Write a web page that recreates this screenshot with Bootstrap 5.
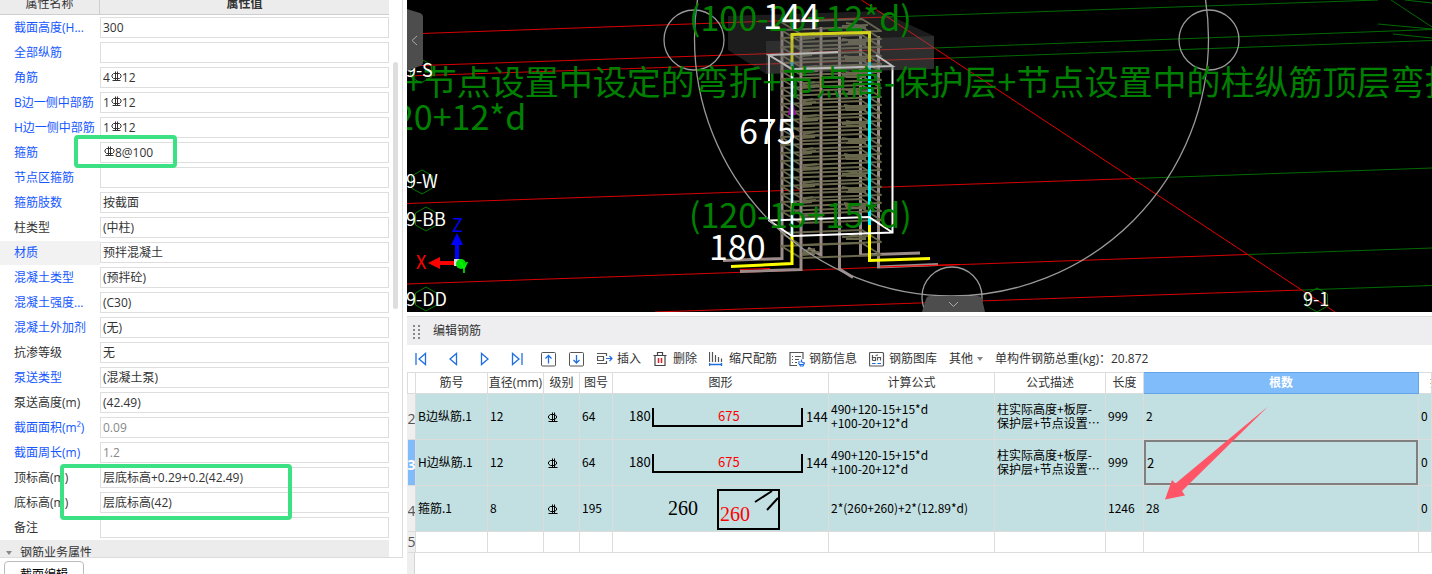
<!DOCTYPE html>
<html lang="zh-CN">
<head>
<meta charset="utf-8">
<meta name="viewport" content="width=device-width, initial-scale=1">
<title>编辑钢筋</title>
<link rel="stylesheet" href="https://cdn.jsdelivr.net/npm/bootstrap@5.3.0/dist/css/bootstrap.min.css">
<style>
  :root { --line: #dcdcdc; --rebar: #c2dfe1; --pick: #80bbfa; }
  body { font: 12px/18px "Open Sans", "Noto Sans CJK SC", sans-serif; color: #333; background: #fff; }

  /* property panel */
  .props { width: 403px; }
  .props-list { border-right: 1px solid var(--line); border-bottom: 1px solid var(--line); min-height: 0; }
  .props-head { height: 15px; line-height: 20px; background: #ececec; border-bottom: 1px solid #cfcfcf; margin-right: 13px; }
  .props-head .name-col { width: 100px; border-right: 1px solid #cfcfcf; }
  .prop { height: 25px; margin-right: 13px; }
  .prop label { width: 100px; padding-left: 14px; height: 24px; line-height: 24px; white-space: nowrap; }
  .prop.common label { color: #1557ff; }
  .prop.active label { background: #f2f2f2; }
  .prop input { height: 21px; min-width: 0; border: 1px solid #dedede; padding: 0 2px 1px; color: #333; background-color: #fff; }
  .prop input:disabled { color: #888; }
  .prop .grade { background-repeat: no-repeat; background-position: 10px 3px;
    background-image: url("data:image/svg+xml,%3Csvg xmlns='http://www.w3.org/2000/svg' width='11' height='11' fill='none' stroke='%23333'%3E%3Cpath d='M2.5 2.500h6l1.500 1.500v2l-1.500 1.500h-6L1 6V4zM4.500.5v9M6.500.5v9M1.500 9.500h8'/%3E%3C/svg%3E"); }
  .prop .grade-first { background-position: 3px 3px; }
  .props-group { height: 25px; line-height: 24px; background: #ececec; margin-right: 13px; padding-left: 6px; }
  .caret { border: 3px solid transparent; border-top: 4px solid #888; border-bottom: 0; width: 6px; }
  .scroll-thumb { right: 4px; top: 62px; width: 5px; height: 247px; background: #dedede; border-radius: 3px; }
  .props-foot { height: 16px; padding: 3px 4px 0; }
  .props-foot button { width: 80px; height: 28px; line-height: 24px; border: 1px solid #bbb; border-radius: 4px; background: #fff; padding: 0; }
  .marker { border: 4px solid #3be183; border-radius: 4px; pointer-events: none; }
  .marker-stirrup { left: 74px; top: 135px; width: 103px; height: 33px; }
  .marker-level { left: 60px; top: 464px; width: 232px; height: 56px; }

  /* 3D view */
  .scene { height: 312px; background: #000; font-family: "Noto Sans CJK SC", sans-serif; }
  .scene .formula { font-size: 34px; fill: #008000; }
  .scene .dim { font-size: 34px; fill: #fff; }
  .scene .axis { font-size: 18px; fill: #fff; }

  /* rebar editor */
  .editor { margin-top: 4px; background: #fff; min-height: 0; }
  .editor-title { height: 29px; background: #eeeef0; border-top: 1px solid var(--line); padding-left: 6px; gap: 12px; }
  .tools { height: 27px; padding-left: 6px; gap: 12px; white-space: nowrap; }
  .tools button { border: 0; background: none; padding: 0; color: #333; display: flex; align-items: center; gap: 4px; height: 24px; }
  .tools svg { flex: none; }
  .grid-area { background: linear-gradient(to right, #efefef 7px, #d4d4d4 7px, #d4d4d4 8px, #fff 8px); min-height: 0; }
  .bars { table-layout: fixed; width: 100%; border-collapse: collapse; border-top: 1px solid var(--line); font: 12px/14px "Noto Sans CJK SC", sans-serif; color: #000; }
  .bars th, .bars td { border: 1px solid var(--line); padding: 0 2px 2px; overflow: hidden; height: 46px; background: var(--rebar); }
  .bars td { white-space: nowrap; }
  .bars thead th { height: 20px; background: #fff; color: #333; font-weight: 400; text-align: center; white-space: nowrap; font-family: "Open Sans", "Noto Sans CJK SC", sans-serif; padding: 0; line-height: 20px; }
  .bars thead th.picked { background: var(--pick); color: #fff; font-weight: 700; border-color: #64a4e8; }
  .bars tbody th { background: #efefef; border-left: 0; padding: 4px 0 0; color: #555; font: 14px/18px "Open Sans", sans-serif; }
  .bars tbody th.picked { background: var(--pick); color: #fff; font-weight: 700; }
  .bars tr.blank th, .bars tr.blank td { height: 21px; padding: 0; }
  .bars tr.blank td { background: #fff; }
  .bars td.shape { padding: 0; }
  .bars td.shape svg { display: block; }
  .bars td.editing { padding: 0; }
  .bars td.editing input { display: block; width: 100%; height: 45px; border: 2px solid #808080; background: transparent; padding: 0 1px; font-size: 13px; color: #000; }
  .bars .cut { text-align: left; padding-left: 11px; }
  .pointer { right: 160px; top: 33px; pointer-events: none; }
</style>
</head>
<body class="vh-100 overflow-hidden">
<svg width="0" height="0" class="position-absolute" aria-hidden="true">
  <defs>
    <g id="hrb" fill="none" stroke="#000"><path d="M2.500 2.500h4l2 1.500v2l-2 1.500h-4L.5 6V4zM4.500.5v9M6.500.5v9M.5 9.500h9"/></g>
    <g id="ushape"><path d="M40 14v18h149V14" fill="none" stroke="#000" stroke-width="2"/>
      <text x="16" y="27">180</text><text x="105" y="27" fill="#f00">675</text><text x="193" y="28">144</text></g>
  </defs>
</svg>

<div class="d-flex h-100 gap-1">
  <aside class="props d-flex flex-column flex-shrink-0 position-relative">
    <div class="props-list flex-grow-1 overflow-hidden position-relative">
      <div class="props-head d-flex overflow-hidden text-center">
        <div class="name-col d-flex align-items-end justify-content-center">属性名称</div>
        <div class="flex-grow-1 d-flex align-items-end justify-content-center fw-bold">属性值</div>
      </div>
      <div>
        <div class="prop common d-flex align-items-center"><label for="p1">截面高度(H...</label><input id="p1" class="flex-grow-1" value="300"></div>
        <div class="prop common d-flex align-items-center"><label for="p2">全部纵筋</label><input id="p2" class="flex-grow-1" value=""></div>
        <div class="prop common d-flex align-items-center"><label for="p3">角筋</label><input id="p3" class="flex-grow-1 grade" value="4　12"></div>
        <div class="prop common d-flex align-items-center"><label for="p4">B边一侧中部筋</label><input id="p4" class="flex-grow-1 grade" value="1　12"></div>
        <div class="prop common d-flex align-items-center"><label for="p5">H边一侧中部筋</label><input id="p5" class="flex-grow-1 grade" value="1　12"></div>
        <div class="prop common d-flex align-items-center"><label for="p6">箍筋</label><input id="p6" class="flex-grow-1 grade grade-first" value="　8@100"></div>
        <div class="prop common d-flex align-items-center"><label for="p7">节点区箍筋</label><input id="p7" class="flex-grow-1" value=""></div>
        <div class="prop common d-flex align-items-center"><label for="p8">箍筋肢数</label><input id="p8" class="flex-grow-1" value="按截面"></div>
        <div class="prop d-flex align-items-center"><label for="p9">柱类型</label><input id="p9" class="flex-grow-1" value="(中柱)"></div>
        <div class="prop common active d-flex align-items-center"><label for="p10">材质</label><input id="p10" class="flex-grow-1" value="预拌混凝土"></div>
        <div class="prop common d-flex align-items-center"><label for="p11">混凝土类型</label><input id="p11" class="flex-grow-1" value="(预拌砼)"></div>
        <div class="prop common d-flex align-items-center"><label for="p12">混凝土强度...</label><input id="p12" class="flex-grow-1" value="(C30)"></div>
        <div class="prop common d-flex align-items-center"><label for="p13">混凝土外加剂</label><input id="p13" class="flex-grow-1" value="(无)"></div>
        <div class="prop d-flex align-items-center"><label for="p14">抗渗等级</label><input id="p14" class="flex-grow-1" value="无"></div>
        <div class="prop common d-flex align-items-center"><label for="p15">泵送类型</label><input id="p15" class="flex-grow-1" value="(混凝土泵)"></div>
        <div class="prop d-flex align-items-center"><label for="p16">泵送高度(m)</label><input id="p16" class="flex-grow-1" value="(42.49)"></div>
        <div class="prop common d-flex align-items-center"><label for="p17">截面面积(m²)</label><input id="p17" class="flex-grow-1" value="0.09" disabled></div>
        <div class="prop common d-flex align-items-center"><label for="p18">截面周长(m)</label><input id="p18" class="flex-grow-1" value="1.2" disabled></div>
        <div class="prop d-flex align-items-center"><label for="p19">顶标高(m)</label><input id="p19" class="flex-grow-1" value="层底标高+0.29+0.2(42.49)"></div>
        <div class="prop d-flex align-items-center"><label for="p20">底标高(m)</label><input id="p20" class="flex-grow-1" value="层底标高(42)"></div>
        <div class="prop d-flex align-items-center"><label for="p21">备注</label><input id="p21" class="flex-grow-1" value=""></div>
      </div>
      <div class="props-group d-flex align-items-center gap-2"><span class="caret"></span><span>钢筋业务属性</span></div>
      <div class="scroll-thumb position-absolute"></div>
    </div>
    <div class="props-foot overflow-hidden"><button type="button">截面编辑</button></div>
    <div class="marker marker-stirrup position-absolute"></div>
    <div class="marker marker-level position-absolute"></div>
  </aside>

  <main class="d-flex flex-column flex-grow-1 overflow-hidden">
    <svg class="scene d-block w-100 flex-shrink-0" role="img" aria-label="柱钢筋三维">
      <g transform="translate(-407 0)">
        <g stroke="#d80000" fill="none">
          <path d="M407 34L887 17M407 66L934 48M407 76L950 58M407 203.500L1134 178.500M407 284L1248 254.500M655 312L1302 290"/>
          <path stroke="#e60000" d="M861.500 0L1335 312"/>
        </g>
        <path stroke="#006a00" fill="none" d="M887 17L1378 0M934 48L1432 29.500M950 58L1432 40.500M1134 178.500L1432 168M1248 254.500L1432 248M1302 290L1432 285.500M1391 0L1432 27M1378 24L1432 29M1393 34L1432 38M1405 0L1432 3"/>
        <g stroke="#007a00" fill="none">
          <path id="hex" d="M422 170l10.500 6v12l-10.500 6-10.500-6v-12z"/>
          <use href="#hex" x="4" y="37"/><use href="#hex" x="4" y="117"/><use href="#hex" x="-1" y="-111"/><use href="#hex" x="895" y="118"/>
        </g>
        <!-- column cage -->
        <g fill="none" stroke="#9b8b89" stroke-width="3">
          <path d="M782 30V258.500L723 260.500M801 35V269.500L740 271.500M821 27V255L808 248M839.500 37V269L853 277.500M860.500 26V255L920 253M878.500 36V267L938 264.500"/>
        </g>
        <path stroke="#f00" d="M740 269.500L770 268.500M880 267L960 264.500"/>
        <g id="hoops" fill="none" stroke="#69674c" stroke-width="2" stroke-linejoin="round"></g>
        <path d="M801 35V269M821 27V255M839.500 37V269" stroke="#9b8b89" stroke-width="2" opacity=".7"/>
        <path d="M792 97l4 18h-8z" fill="#a0a"/>
        <path d="M792 62V236" stroke="#3cc" stroke-width="3"/>
        <path d="M869.500 62V225" stroke="#0ff" stroke-width="3"/>
        <path d="M792 62V34.500L869.500 32.500V62M792 236V263.500L731 266.500M869.500 225V260.500L930 258.500" fill="none" stroke="#ff0" stroke-width="3"/>
        <g fill="none" stroke="#fff" stroke-width="2">
          <path d="M838 52L769 55L792 69L892.500 66L876 55M769 55V220.500L792 236L892.500 232.500V66M792 69V236M769 220.500L869 217L892.500 232.500"/>
        </g>
        <path d="M728 16L880 11L934 36L766 41V74L728 50z" fill="#666" opacity=".28"/>
        <path d="M766 41L934 36V69L766 74z" fill="#666" opacity=".45"/>
        <g fill="none" stroke="#999" stroke-width="1.300">
          <circle cx="951.500" cy="39" r="257"/><circle cx="694" cy="40" r="30"/><circle cx="1209" cy="40" r="30"/><circle cx="952" cy="297" r="30"/>
        </g>
        <g class="formula">
          <text x="689" y="31">(100-20+12*d)</text>
          <text x="404" y="95">+节点设置中设定的弯折+节点高-保护层+节点设置中的柱纵筋顶层弯折</text>
          <text x="395" y="130">20+12*d</text>
          <text x="689" y="228">(120-15+15*d)</text>
        </g>
        <g class="dim"><text x="763" y="29">144</text><text x="739" y="144">675</text><text x="709" y="260">180</text></g>
        <g class="axis">
          <text x="406" y="77">9-S</text><text x="406" y="188">9-W</text><text x="406" y="226">9-BB</text><text x="406" y="306">9-DD</text><text x="1303" y="306">9-1</text>
          <text x="416" y="269" style="fill:#f00">X</text><text x="452" y="232" style="fill:#00f">Z</text>
        </g>
        <path d="M440 261h15v4h-15v4l-12-6 12-6z" fill="#f00"/>
        <path d="M455 259v-14h-4l6-12 6 12h-4v14z" fill="#00f"/>
        <path d="M454 259h7v7h-7z" fill="#ddd"/><circle cx="461" cy="264" r="5" fill="#0d0"/>
        <text x="460" y="273" font-size="15" fill="#0f0">Y</text>
        <path d="M407 9l13 4q3 1 3 4v45q0 3-3 4l-13 5z" fill="#4d4d4d"/><path d="M417 36l-5 4.500 5 4.500" stroke="#aaa" fill="none"/>
        <path d="M922 312l4-13q1-3 4-3h48q3 0 4 3l3 13z" fill="#4d4d4d"/><path d="M949 302l4.500 4.500 4.500-4.500" stroke="#aaa" fill="none"/>
      </g>
    </svg>

    <section class="editor d-flex flex-column flex-grow-1">
      <div class="editor-title d-flex align-items-center flex-shrink-0">
        <svg width="8" height="15" fill="#888"><path d="M0 1h2v2H0zM5 1h2v2H5zM0 5h2v2H0zM5 5h2v2H5zM0 9h2v2H0zM5 9h2v2H5zM0 13h2v2H0zM5 13h2v2H5z"/></svg>
        <span>编辑钢筋</span>
      </div>
      <div class="tools d-flex align-items-center flex-shrink-0">
        <div class="d-flex gap-3 me-1">
          <button type="button" aria-label="首条"><svg width="16" height="16" fill="none" stroke="#1f6fe0" stroke-width="1.300"><path d="M3 2v12M12.500 2.500v11L6 8z"/></svg></button>
          <button type="button" aria-label="上一条"><svg width="16" height="16" fill="none" stroke="#1f6fe0" stroke-width="1.300"><path d="M11.500 2.500v11L5 8z"/></svg></button>
          <button type="button" aria-label="下一条"><svg width="16" height="16" fill="none" stroke="#1f6fe0" stroke-width="1.300"><path d="M4.500 2.500v11L11 8z"/></svg></button>
          <button type="button" aria-label="末条"><svg width="16" height="16" fill="none" stroke="#1f6fe0" stroke-width="1.300"><path d="M3.500 2.500v11L10 8zM13 2v12"/></svg></button>
        </div>
        <button type="button" aria-label="上移"><svg width="16" height="16" fill="none" stroke="#555"><rect x=".5" y="1.500" width="14" height="13.500" rx="1"/><path d="M7.500 12.500v-8M4.500 7.500l3-3 3 3" stroke="#1f6fe0" stroke-width="1.300"/></svg></button>
        <button type="button" aria-label="下移"><svg width="16" height="16" fill="none" stroke="#555"><rect x=".5" y="1.500" width="14" height="13.500" rx="1"/><path d="M7.500 4v8M4.500 9l3 3 3-3" stroke="#1f6fe0" stroke-width="1.300"/></svg></button>
        <button type="button"><svg width="16" height="16" fill="none" stroke="#555" stroke-width="1.200"><path d="M0 2.500h9.500V5M0 12.500h9.500V10M.5 5.500h6v4h-6z"/><path d="M9 7.500h6M12.500 5l2.500 2.500-2.500 2.500" stroke="#1f6fe0"/></svg>插入</button>
        <button type="button"><svg width="16" height="16" fill="none" stroke="#444" stroke-width="1.200"><path d="M.5 4.500h13M4.500 4V1.500h5V4M2 4.500v10h10v-10"/><path d="M5.500 7v5M8.500 7v5" stroke="#e02020" stroke-width="1.500"/></svg>删除</button>
        <button type="button"><svg width="16" height="16" fill="none" stroke="#555" stroke-width="1.200"><path d="M.5 1v10M3.500 1v10M6.500 4v7M9.500 6v5M12.500 7.500V11"/><path d="M.5 13.500h12M.5 12v3M12.500 12v3" stroke="#1f6fe0" stroke-width="1.400"/></svg>缩尺配筋</button>
        <button type="button"><svg width="16" height="16" fill="none" stroke="#555" stroke-width="1.200"><path d="M8 14.500H1v-13h13V8M3 5.500h1M6 5.500h6M3 8.500h1M6 8.500h4M3 11.500h1M6 11.500h2"/><path d="M12.500 8.500V11M9 11h2.500M10 13.500h5M12.500 11l3 1-1.500 3h-2.500L9.500 12" stroke="#1f6fe0"/></svg>钢筋信息</button>
        <button type="button"><svg width="16" height="16" fill="none" stroke="#555" stroke-width="1.200"><rect x=".5" y="1.500" width="14" height="13.500" rx="1"/><path d="M3.500 4v5.500M3.500 6.500h3v3h-3M6.500 4.500L9 4M8.500 9.500v-3h3v3"/><path d="M3 12.500h3.500M8.500 12.500H12" stroke="#1f6fe0"/></svg>钢筋图库</button>
        <button type="button">其他<span class="caret"></span></button>
        <span>单构件钢筋总重(kg)：20.872</span>
      </div>

      <div class="grid-area flex-grow-1 position-relative">
        <table class="bars">
          <colgroup><col style="width:8px"><col style="width:72px"><col style="width:56px"><col style="width:36px"><col style="width:33px"><col style="width:216px"><col style="width:166px"><col style="width:111px"><col style="width:38px"><col><col style="width:13px"></colgroup>
          <thead><tr><th></th><th>筋号</th><th>直径(mm)</th><th>级别</th><th>图号</th><th>图形</th><th>计算公式</th><th>公式描述</th><th>长度</th><th class="picked">根数</th><th class="cut">搭接</th></tr></thead>
          <tbody>
            <tr><th>2</th><td>B边纵筋.1</td><td>12</td><td class="ps-1"><svg width="11" height="11"><use href="#hrb"/></svg></td><td>64</td>
              <td class="shape"><svg width="215" height="45" font-size="13"><use href="#ushape"/></svg></td>
              <td>490+120-15+15*d<br>+100-20+12*d</td><td>柱实际高度+板厚-<br>保护层+节点设置…</td><td>999</td><td>2</td><td>0</td></tr>
            <tr><th class="picked">3</th><td>H边纵筋.1</td><td>12</td><td class="ps-1"><svg width="11" height="11"><use href="#hrb"/></svg></td><td>64</td>
              <td class="shape"><svg width="215" height="45" font-size="13"><use href="#ushape"/></svg></td>
              <td>490+120-15+15*d<br>+100-20+12*d</td><td>柱实际高度+板厚-<br>保护层+节点设置…</td><td>999</td><td class="editing"><input aria-label="根数" value="2"></td><td>0</td></tr>
            <tr><th>4</th><td>箍筋.1</td><td>8</td><td class="ps-1"><svg width="11" height="11"><use href="#hrb"/></svg></td><td>195</td>
              <td class="shape"><svg width="215" height="45" font-size="20" font-family="Liberation Serif, serif"><path d="M105 4h61v39h-61zM142 16l17-11M154 24l11-12" fill="none" stroke="#000" stroke-width="2"/><text x="55" y="29">260</text><text x="107" y="35" fill="#f00">260</text></svg></td>
              <td>2*(260+260)+2*(12.89*d)</td><td></td><td>1246</td><td>28</td><td>0</td></tr>
            <tr class="blank"><th>5</th><td></td><td></td><td></td><td></td><td></td><td></td><td></td><td></td><td></td><td></td></tr>
          </tbody>
        </table>
        <svg class="pointer position-absolute" width="108" height="96" fill="#ff5566"><path d="M1 94.500L8 75l3.500 3.500L104 1.500 18 86l3 4.500z"/></svg>
      </div>
    </section>
  </main>
</div>

<script src="https://cdn.jsdelivr.net/npm/bootstrap@5.3.0/dist/js/bootstrap.bundle.min.js"></script>
<script>
  // Stirrups: one skewed ring per level of the column, hooks bundled at alternating corners
  const levels = Array.from({ length: 24 }, (_, i) => Math.round(22 + i * 8.2)).concat(233, 246);
  document.getElementById('hoops').innerHTML = levels.map((y, i) => {
    const s = i % 3;
    const hook = i % 2
      ? `<path d="M801 ${y + 7}L${816 + s * 3} ${y + 6}M802 ${y + 9}L${812 + s * 3} ${y + 8}M803 ${y + 5}L${813 + s * 2} ${y + 3}"/>`
      : `<path d="M${842 + s * 3} ${y + 4}L868 ${y + 3}M${846 - s * 2} ${y + 1}L866 ${y + 5}M846 ${y + 6}L866 ${y + 6}"/>`;
    return `<path d="M781 ${y}L801 ${y + 12}L881 ${y + 9}L862 ${y - 3}z"/>${hook}`;
  }).join('');
</script>
</body>
</html>
